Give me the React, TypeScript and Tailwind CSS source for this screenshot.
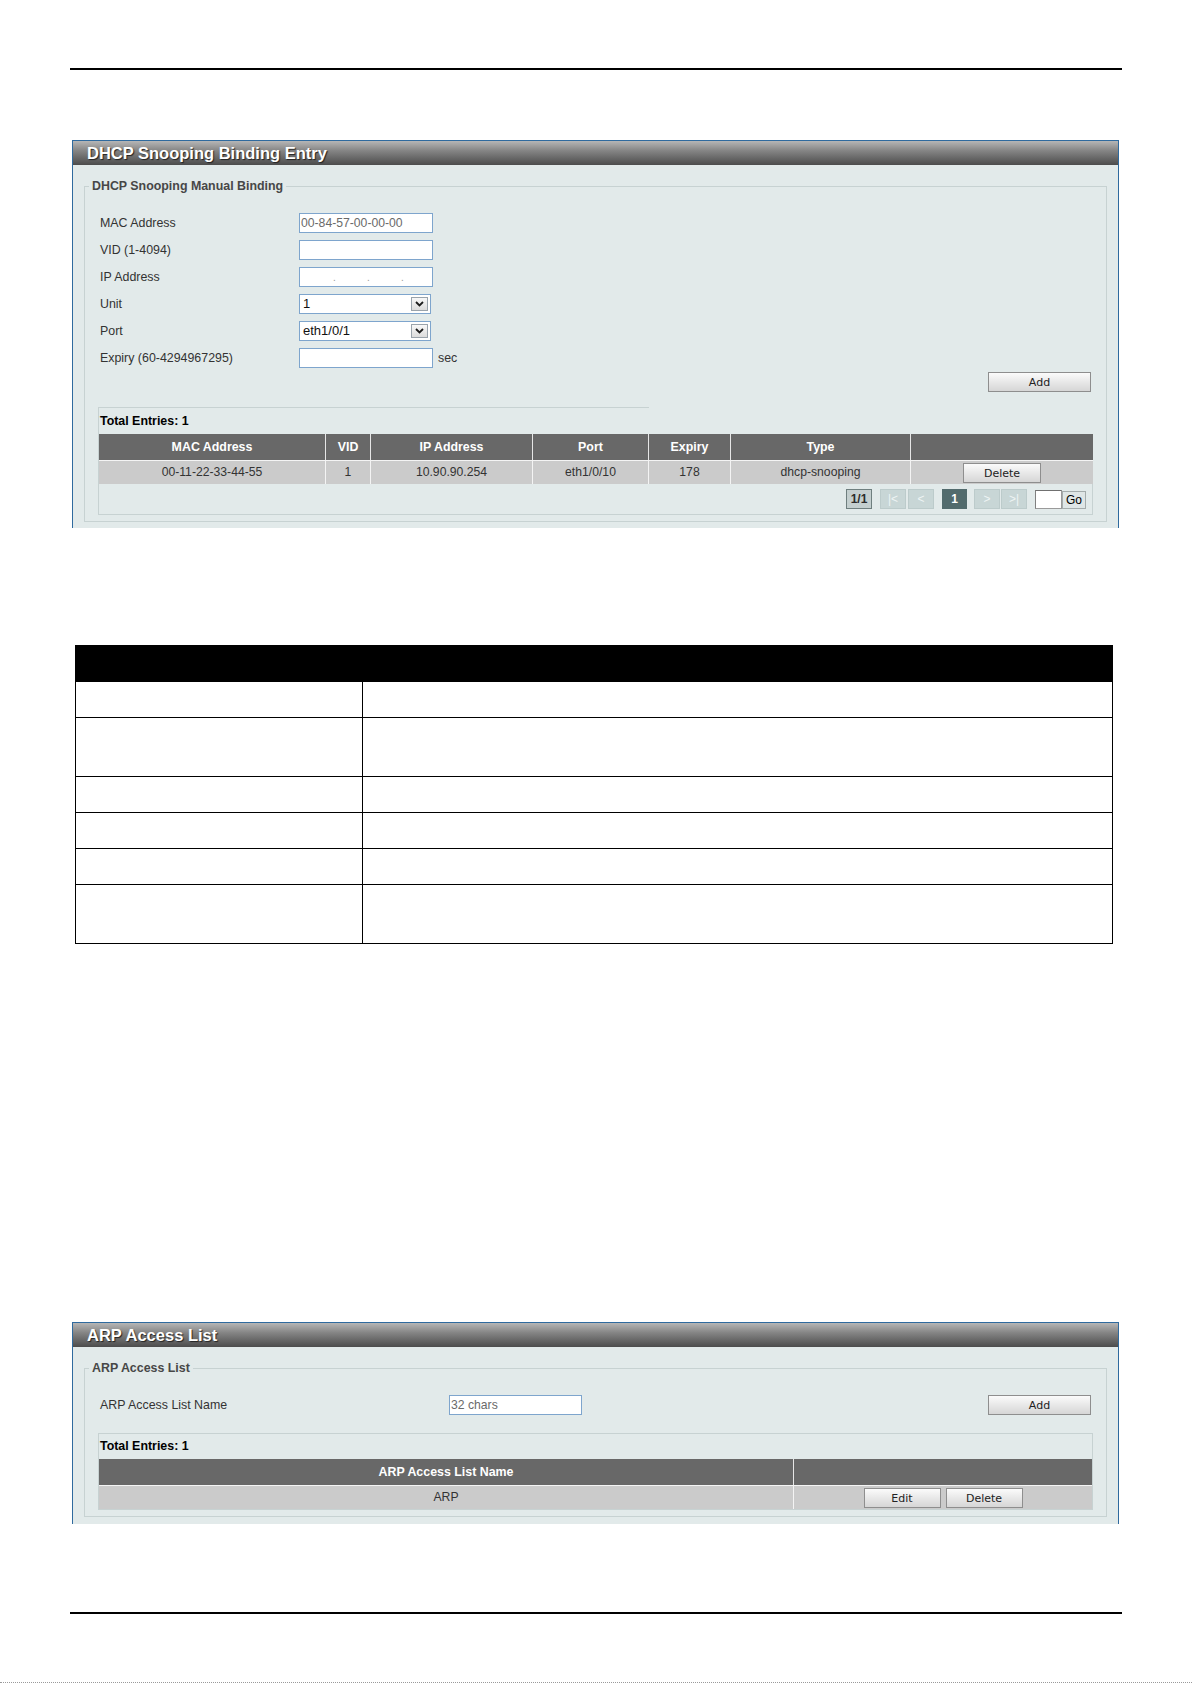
import React from "react";

const labelCls = "text-[12.4px] text-[#333] leading-[14px]";

function PanelHeader({ title }: { title: string }) {
  return (
    <div className="h-[24px] flex items-center pl-[14px] bg-[linear-gradient(to_bottom,#b6b6b6,#858585_40%,#4c4c4c)]">
      <span className="text-white font-bold text-[16.5px] leading-[18px] [text-shadow:1px_1px_1px_#222] -mt-[1px]">
        {title}
      </span>
    </div>
  );
}

function Btn({ children, w }: { children: React.ReactNode; w: string }) {
  return (
    <button
      type="button"
      className={`${w} h-[20px] border border-[#8e8e8e] bg-[linear-gradient(to_bottom,#fbfbfb,#e8e8e8_50%,#d6d6d6)] font-['DejaVu_Sans',sans-serif] text-[11px] leading-[18px] text-[#222] pt-[1px]`}
    >
      {children}
    </button>
  );
}

function TextBox({ value, w = "w-[134px]" }: { value?: string; w?: string }) {
  return (
    <div className={`${w} h-[20px] border border-[#7ea5cd] bg-white flex items-center pl-[1px] text-[12.2px] text-[#6a6a6a]`}>
      {value}
    </div>
  );
}

function IpBox() {
  return (
    <div className="w-[134px] h-[20px] border border-[#7ea5cd] bg-white flex items-end pb-[3px] text-[10px] leading-[10px] text-[#9a9a9a]">
      <span className="w-[33px]" />
      <span className="w-[34px]">.</span>
      <span className="w-[34px]">.</span>
      <span>.</span>
    </div>
  );
}

function SelectBox({ value }: { value: string }) {
  return (
    <div className="w-[132px] h-[20px] border border-[#7ea5cd] bg-white flex items-center justify-between pl-[3px] pr-[2px]">
      <span className="text-[13px] text-[#111] leading-[14px]">{value}</span>
      <span className="w-[17px] h-[14px] border border-[#9aa3ab] bg-[linear-gradient(to_bottom,#f8f8f8,#dcdcdc)] flex items-center justify-center">
        <svg width="9" height="6" viewBox="0 0 9 6">
          <path d="M1 1 L4.5 4.5 L8 1" fill="none" stroke="#1d1d1d" strokeWidth="1.8" />
        </svg>
      </span>
    </div>
  );
}

function FormRow({ label, children }: { label: string; children: React.ReactNode }) {
  return (
    <div className="flex items-center h-[20px]">
      <div className={`w-[201px] pl-[2px] ${labelCls}`}>{label}</div>
      {children}
    </div>
  );
}

function PageBtn({ children, kind }: { children: React.ReactNode; kind: "info" | "off" | "on" }) {
  const base = "h-[20px] flex items-center justify-center text-[12px] leading-[14px]";
  if (kind === "info")
    return (
      <div className={`${base} w-[26px] border border-[#6f7f7f] bg-[#c4cfcf] font-bold text-[#2c2c2c]`}>{children}</div>
    );
  if (kind === "on")
    return <div className={`${base} w-[25px] bg-[#526b6d] font-bold text-white`}>{children}</div>;
  return (
    <div className={`${base} w-[26px] border border-[#bccbcb] bg-[#c8d6d6] text-[#eef4f4]`}>{children}</div>
  );
}

const hdr = "h-[26px] flex items-center justify-center text-white font-bold text-[12.4px] border-r border-[#e6e6e6]";
const cell = "h-[23px] flex items-center justify-center text-[#333] text-[12.2px] border-r border-[#f4f4f4]";
const legendCls = "-ml-[9px] px-[3px] text-[12.4px] leading-[14px] font-bold text-[#474747]";

function BindingPanel() {
  const cols = ["w-[227px]", "w-[45px]", "w-[162px]", "w-[116px]", "w-[82px]", "w-[180px]", "flex-1"];
  const heads = ["MAC Address", "VID", "IP Address", "Port", "Expiry", "Type", ""];
  const vals = ["00-11-22-33-44-55", "1", "10.90.90.254", "eth1/0/10", "178", "dhcp-snooping"];
  return (
    <div className="ml-[72px] w-[1047px] border-x border-t border-[#2f6a9e]">
      <PanelHeader title="DHCP Snooping Binding Entry" />
      <div className="bg-[#e2eaea] px-[11px] pt-[14px] pb-[6px]">
        <fieldset className="border border-[#c7d2d2] px-[13px] pb-[6px]">
          <legend className={legendCls}>DHCP Snooping Manual Binding</legend>
          <div className="pt-[20px] flex flex-col gap-[7px]">
            <FormRow label="MAC Address">
              <TextBox value="00-84-57-00-00-00" />
            </FormRow>
            <FormRow label="VID (1-4094)">
              <TextBox />
            </FormRow>
            <FormRow label="IP Address">
              <IpBox />
            </FormRow>
            <FormRow label="Unit">
              <SelectBox value="1" />
            </FormRow>
            <FormRow label="Port">
              <SelectBox value="eth1/0/1" />
            </FormRow>
            <FormRow label="Expiry (60-4294967295)">
              <TextBox />
              <span className={`ml-[5px] ${labelCls}`}>sec</span>
            </FormRow>
          </div>
          <div className="flex justify-end pr-[2px] mt-[4px]">
            <Btn w="w-[103px]">Add</Btn>
          </div>
          <div className="mt-[15px]">
            <div className="w-[551px] h-px bg-[#c7d2d2]" />
            <div className="border-l border-b border-[#c7d2d2]">
              <div className="h-[26px] flex items-center pl-[1px] text-[12.4px] font-bold text-black">Total Entries: 1</div>
              <div className="flex bg-[#686868]">
                {heads.map((h, i) => (
                  <div key={i} className={`${hdr} ${cols[i]} ${i === 6 ? "border-r-0" : ""}`}>
                    {h}
                  </div>
                ))}
              </div>
              <div className="flex bg-[#cbcbcb] border-t border-[#f4f4f4]">
                {vals.map((v, i) => (
                  <div key={i} className={`${cell} ${cols[i]}`}>
                    {v}
                  </div>
                ))}
                <div className={`${cell} flex-1 border-r-0 pt-[1px]`}>
                  <Btn w="w-[78px]">Delete</Btn>
                </div>
              </div>
              <div className="h-[30px] flex items-center justify-end pr-[6px] border-r border-[#c7d2d2]">
                <PageBtn kind="info">1/1</PageBtn>
                <div className="ml-[8px] flex gap-[2px]">
                  <PageBtn kind="off">|&lt;</PageBtn>
                  <PageBtn kind="off">&lt;</PageBtn>
                </div>
                <div className="ml-[8px]">
                  <PageBtn kind="on">1</PageBtn>
                </div>
                <div className="ml-[7px] flex gap-[1px]">
                  <PageBtn kind="off">&gt;</PageBtn>
                  <PageBtn kind="off">&gt;|</PageBtn>
                </div>
                <div className="ml-[8px] w-[27px] h-[19px] bg-white border border-[#9a9a9a] border-t-[#707070] border-l-[#808080]" />
                <div className="w-[24px] h-[18px] mt-[1px] border border-[#a4acac] bg-[#dfe6e6] flex items-center justify-center text-[12px] text-black">
                  Go
                </div>
              </div>
            </div>
          </div>
        </fieldset>
      </div>
    </div>
  );
}

function ArpPanel() {
  return (
    <div className="ml-[72px] w-[1047px] border-x border-t border-[#2f6a9e]">
      <PanelHeader title="ARP Access List" />
      <div className="bg-[#e2eaea] px-[11px] pt-[14px] pb-[7px]">
        <fieldset className="border border-[#c7d2d2] px-[13px] pb-[6px]">
          <legend className={legendCls}>ARP Access List</legend>
          <div className="pt-[20px] flex items-center pr-[2px]">
            <div className={`w-[351px] pl-[2px] ${labelCls}`}>ARP Access List Name</div>
            <TextBox value="32 chars" w="w-[133px]" />
            <div className="flex-1" />
            <Btn w="w-[103px]">Add</Btn>
          </div>
          <div className="mt-[18px] border border-[#c7d2d2]">
            <div className="h-[25px] flex items-center pl-[1px] text-[12.4px] font-bold text-black">Total Entries: 1</div>
            <div className="flex bg-[#686868]">
              <div className={`${hdr} w-[695px]`}>ARP Access List Name</div>
              <div className={`${hdr} flex-1 border-r-0`} />
            </div>
            <div className="flex bg-[#cbcbcb] border-t border-[#f4f4f4]">
              <div className={`${cell} w-[695px]`}>ARP</div>
              <div className={`${cell} flex-1 border-r-0 gap-[5px] pt-[1px]`}>
                <Btn w="w-[77px]">Edit</Btn>
                <Btn w="w-[77px]">Delete</Btn>
              </div>
            </div>
          </div>
        </fieldset>
      </div>
    </div>
  );
}

function BlankTable() {
  // row heights include the 1px top rule
  const rows = ["h-[36px]", "h-[59px]", "h-[36px]", "h-[36px]", "h-[36px]", "h-[59px]"];
  return (
    <div className="ml-[75px] w-[1038px] border border-black">
      <div className="h-[35px] bg-black" />
      {rows.map((h, i) => (
        <div key={i} className={`flex border-t border-black ${h}`}>
          <div className="w-[287px] border-r border-black" />
          <div className="flex-1" />
        </div>
      ))}
    </div>
  );
}

export default function App() {
  return (
    <div className="w-[1192px] h-[1684px] bg-white font-['Liberation_Sans',Arial,sans-serif] text-[#333] overflow-hidden">
      <div className="pt-[68px] pl-[70px]">
        <div className="w-[1052px] h-[2px] bg-black" />
      </div>
      <div className="mt-[70px]">
        <BindingPanel />
      </div>
      <div className="mt-[117px]">
        <BlankTable />
      </div>
      <div className="mt-[378px]">
        <ArpPanel />
      </div>
      <div className="mt-[88px] pl-[70px]">
        <div className="w-[1052px] h-[2px] bg-black" />
      </div>
      <div className="mt-[68px] border-t border-dotted border-[#9a9a9a]" />
    </div>
  );
}
